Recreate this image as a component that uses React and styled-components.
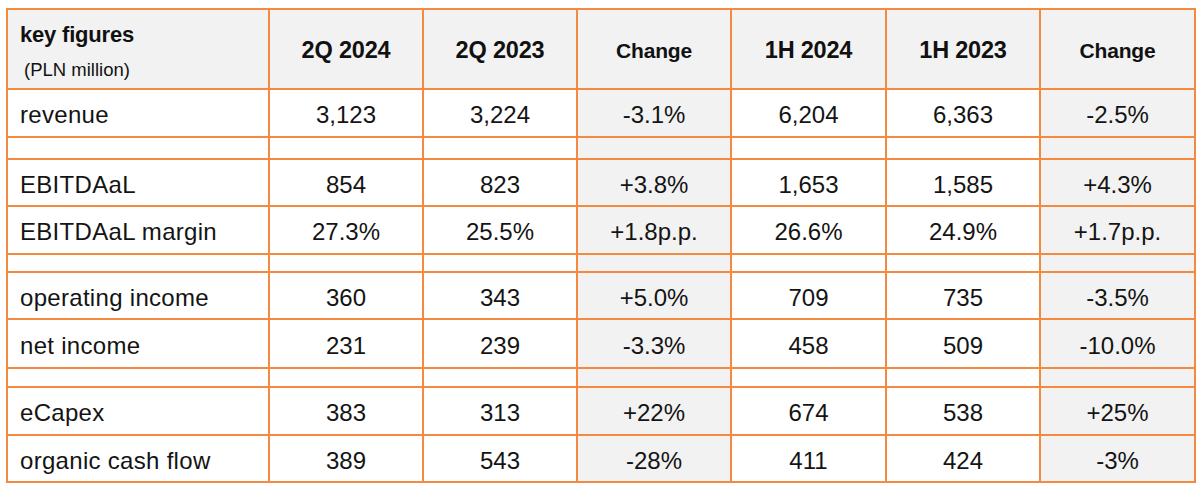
import React from "react";
import styled, { createGlobalStyle } from "styled-components";

const Global = createGlobalStyle`
  html, body { margin: 0; padding: 0; background: #ffffff; }
  body { font-family: "Liberation Sans", Arial, Helvetica, sans-serif; color: #141414; }
`;

const Page = styled.div`
  padding: 8px 0 0 6px;
`;

const Table = styled.table`
  border-collapse: collapse;
  table-layout: fixed;
  width: 1188px;
  border: 2px solid #f48a40;
`;

const Col = styled.col`
  width: ${(p) => p.$w}px;
`;

const Row = styled.tr`
  height: ${(p) => p.$h}px;
`;

const HeadCell = styled.th`
  border: 2px solid #f48a40;
  background: #f2f2f2;
  font-weight: 700;
  font-size: ${(p) => (p.$small ? "21px" : "23.5px")};
  letter-spacing: ${(p) => (p.$small ? "-0.2px" : "-0.2px")};
  text-align: center;
  vertical-align: middle;
  padding: 3px 0 0 0;
  color: #111;
`;

const TitleCell = styled.th`
  border: 2px solid #f48a40;
  background: #f2f2f2;
  text-align: left;
  vertical-align: top;
  padding: 13px 0 0 12px;
  font-weight: 700;
  color: #111;
`;

const Title = styled.div`
  font-size: 22px;
  letter-spacing: -0.2px;
  line-height: 24px;
`;

const Unit = styled.div`
  font-size: 18.5px;
  font-weight: 400;
  line-height: 22px;
  margin-top: 12px;
  padding-left: 4px;
`;

const LabelCell = styled.td`
  border: 2px solid #f48a40;
  background: #ffffff;
  text-align: left;
  padding: 4px 0 0 12px;
  font-size: 24px;
  letter-spacing: 0.3px;
  vertical-align: middle;
  white-space: nowrap;
`;

const Cell = styled.td`
  border: 2px solid #f48a40;
  background: ${(p) => (p.$shade ? "#f2f2f2" : "#ffffff")};
  text-align: center;
  padding: 4px 0 0 0;
  font-size: 24px;
  vertical-align: middle;
  white-space: nowrap;
`;

const widths = [262, 154, 154, 154, 155, 154, 155];

const headers = ["2Q 2024", "2Q 2023", "Change", "1H 2024", "1H 2023", "Change"];

const rows = [
  { h: 48, label: "revenue", v: ["3,123", "3,224", "-3.1%", "6,204", "6,363", "-2.5%"] },
  { h: 22, spacer: true },
  { h: 47, label: "EBITDAaL", v: ["854", "823", "+3.8%", "1,653", "1,585", "+4.3%"] },
  { h: 48, label: "EBITDAaL margin", v: ["27.3%", "25.5%", "+1.8p.p.", "26.6%", "24.9%", "+1.7p.p."] },
  { h: 18, spacer: true },
  { h: 47, label: "operating income", v: ["360", "343", "+5.0%", "709", "735", "-3.5%"] },
  { h: 49, label: "net income", v: ["231", "239", "-3.3%", "458", "509", "-10.0%"] },
  { h: 19, spacer: true },
  { h: 48, label: "eCapex", v: ["383", "313", "+22%", "674", "538", "+25%"] },
  { h: 47, label: "organic cash flow", v: ["389", "543", "-28%", "411", "424", "-3%"] },
];

const shadeIdx = [2, 5];

export default function App() {
  return (
    <>
      <Global />
      <Page>
        <Table>
          <colgroup>
            {widths.map((w, i) => (
              <Col key={i} $w={w} />
            ))}
          </colgroup>
          <thead>
            <Row $h={80}>
              <TitleCell>
                <Title>key figures</Title>
                <Unit>(PLN million)</Unit>
              </TitleCell>
              {headers.map((h, i) => (
                <HeadCell key={i} $small={h === "Change"}>
                  {h}
                </HeadCell>
              ))}
            </Row>
          </thead>
          <tbody>
            {rows.map((r, ri) => (
              <Row key={ri} $h={r.h}>
                <LabelCell>{r.label || ""}</LabelCell>
                {[0, 1, 2, 3, 4, 5].map((ci) => (
                  <Cell key={ci} $shade={shadeIdx.includes(ci)}>
                    {r.spacer ? "" : r.v[ci]}
                  </Cell>
                ))}
              </Row>
            ))}
          </tbody>
        </Table>
      </Page>
    </>
  );
}
